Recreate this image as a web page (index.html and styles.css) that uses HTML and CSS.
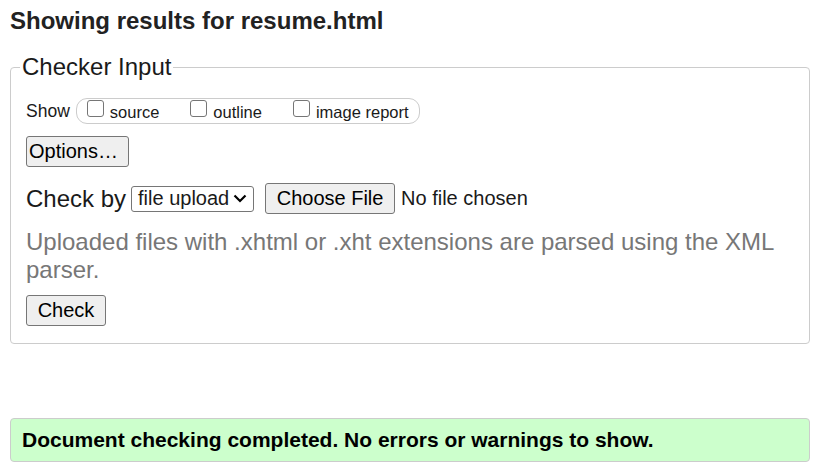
FILE: index.html
```html
<!DOCTYPE html>
<html>
<head>
<meta charset="utf-8">
<title>Showing results for resume.html</title>
<link rel="stylesheet" href="styles.css">
</head>
<body>
<h2 class="title">Showing results for resume.html</h2>
<fieldset class="checker">
  <legend class="legend">Checker Input</legend>
  <div class="show-row">
    <span class="show-label">Show</span>
    <div class="pill">
      <label class="opt"><input type="checkbox" class="cb"><span>source</span></label>
      <label class="opt"><input type="checkbox" class="cb"><span>outline</span></label>
      <label class="opt"><input type="checkbox" class="cb"><span>image report</span></label>
    </div>
  </div>
  <div class="options-row"><button class="btn btn-options" type="button">Options…</button></div>
  <div class="checkby-row">
    <span class="checkby-label">Check by</span>
    <div class="select">
      <span>file upload</span>
      <svg class="chev" width="14" height="9" viewBox="0 0 14 9"><path d="M1.5 1.5 L7 7 L12.5 1.5" fill="none" stroke="#000" stroke-width="2.2"/></svg>
    </div>
    <button class="btn btn-file" type="button">Choose File</button>
    <span class="nofile">No file chosen</span>
  </div>
  <p class="hint">Uploaded files with .xhtml or .xht extensions are parsed using the XML parser.</p>
  <div class="check-row"><button class="btn btn-check" type="submit">Check</button></div>
</fieldset>
<div class="success">Document checking completed. No errors or warnings to show.</div>
</body>
</html>
```

FILE: styles.css
```css
html, body {
  margin: 0;
  padding: 0;
  background: #fff;
}
body {
  padding: 0 7px 0 10px;
  font-family: "Liberation Sans", Arial, sans-serif;
  color: #1a1a1a;
}
.title {
  margin: 7px 0 0;
  font-size: 24px;
  line-height: 28px;
  font-weight: bold;
  color: #222;
}
.checker {
  margin: 18px 0 0;
  border: 1px solid #cccccc;
  border-radius: 4px;
  padding: 17px 15px 17px 15px;
  min-width: 0;
}
.legend {
  font-size: 24px;
  line-height: 28px;
  padding: 0 2px;
  margin-left: -6px;
  color: #1a1a1a;
}
.show-row {
  display: flex;
  align-items: center;
  height: 26px;
}
.show-label {
  font-size: 17.5px;
  margin-right: 6px;
}
.pill {
  display: flex;
  align-items: center;
  height: 24px;
  border: 1px solid #cccccc;
  border-radius: 11px;
  padding: 0 10px 0 10px;
}
.opt {
  display: flex;
  align-items: center;
  font-size: 16.5px;
  margin-right: 31px;
}
.opt:last-child { margin-right: 0; }
.cb {
  appearance: none;
  -webkit-appearance: none;
  flex: 0 0 17px;
  width: 17px;
  height: 17px;
  margin: -6px 6px 0 0;
  border: 1px solid #767676;
  border-radius: 3px;
  background: #fff;
  box-sizing: border-box;
}
.opt span { padding-top: 3px; }
.options-row {
  margin-top: 12px;
}
.btn {
  font-family: "Liberation Sans", Arial, sans-serif;
  font-size: 20px;
  color: #000;
  background: #efefef;
  border: 1px solid #767676;
  border-radius: 3px;
  height: 31px;
  box-sizing: border-box;
  padding: 0 6px;
  line-height: 29px;
}
.btn-options {
  width: 103px;
  padding: 0 10px 0 2px;
  text-align: left;
}
.checkby-row {
  display: flex;
  align-items: center;
  margin-top: 16px;
  height: 31px;
}
.checkby-label {
  font-size: 24px;
  margin-right: 5px;
}
.select {
  display: flex;
  align-items: center;
  height: 26px;
  box-sizing: border-box;
  width: 123px;
  border: 1px solid #767676;
  border-radius: 3px;
  padding: 0 6px 0 6px;
  font-size: 20px;
  justify-content: space-between;
}
.chev { display: block; }
.btn-file {
  margin-left: 11px;
  width: 130px;
  padding: 0;
}
.nofile {
  font-size: 20px;
  margin-left: 6px;
}
.hint {
  margin: 14px 0 0;
  font-size: 24px;
  line-height: 28px;
  color: #777777;
}
.check-row {
  margin-top: 11px;
}
.btn-check {
  width: 80px;
  padding: 0;
}
.success {
  margin-top: 74px;
  background: #ccffcc;
  border: 1px solid #cccccc;
  border-radius: 4px;
  height: 44px;
  box-sizing: border-box;
  display: flex;
  align-items: center;
  padding: 0 11px;
  font-size: 21px;
  font-weight: bold;
  color: #000;
}
```
